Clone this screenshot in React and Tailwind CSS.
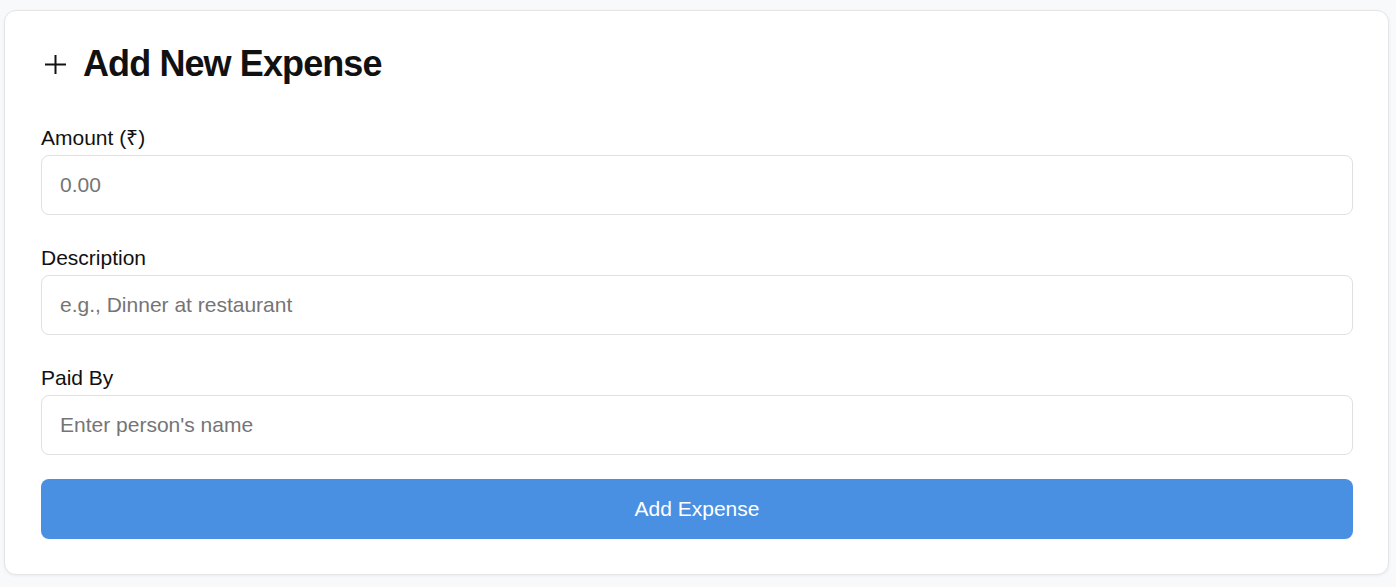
export default function App() {
  return (
    <div className="min-h-[587px] bg-[#f8f9fa] pl-[4px] pt-[10px] pb-[11px] font-['Liberation_Sans',Arial,sans-serif]">
      <div className="w-[1385px] rounded-[12px] border border-[#e4e5e7] bg-white pl-[36px] pr-[35px] pt-[37px] pb-[35px] shadow-[0_1px_3px_rgba(0,0,0,0.06)]">
        {/* Header */}
        <div className="mb-[46px] flex items-center">
          <svg width="21" height="21" viewBox="0 0 21 21" className="ml-[4px] mr-[17px]" fill="none" stroke="#111" strokeWidth="2" strokeLinecap="butt">
            <line x1="10.5" y1="1" x2="10.5" y2="20" />
            <line x1="0" y1="10.5" x2="21" y2="10.5" />
          </svg>
          <h2 className="text-[36px] font-bold leading-[32px] tracking-tight text-[#111]">Add New Expense</h2>
        </div>

        {/* Amount */}
        <label className="mb-[5px] block text-[21px] leading-[24px] text-[#111]">Amount (₹)</label>
        <input
          type="number"
          placeholder="0.00"
          className="mb-[31px] block h-[60px] w-full rounded-[8px] border border-[#e0e0e0] px-[18px] text-[21px] text-[#111] outline-none placeholder:text-[#757575]"
        />

        {/* Description */}
        <label className="mb-[5px] block text-[21px] leading-[24px] text-[#111]">Description</label>
        <input
          type="text"
          placeholder="e.g., Dinner at restaurant"
          className="mb-[31px] block h-[60px] w-full rounded-[8px] border border-[#e0e0e0] px-[18px] text-[21px] text-[#111] outline-none placeholder:text-[#757575]"
        />

        {/* Paid By */}
        <label className="mb-[5px] block text-[21px] leading-[24px] text-[#111]">Paid By</label>
        <input
          type="text"
          placeholder="Enter person's name"
          className="mb-[24px] block h-[60px] w-full rounded-[8px] border border-[#e0e0e0] px-[18px] text-[21px] text-[#111] outline-none placeholder:text-[#757575]"
        />

        <button className="block h-[60px] w-full rounded-[8px] bg-[#4a90e2] text-[21px] text-white">
          Add Expense
        </button>
      </div>
    </div>
  );
}
